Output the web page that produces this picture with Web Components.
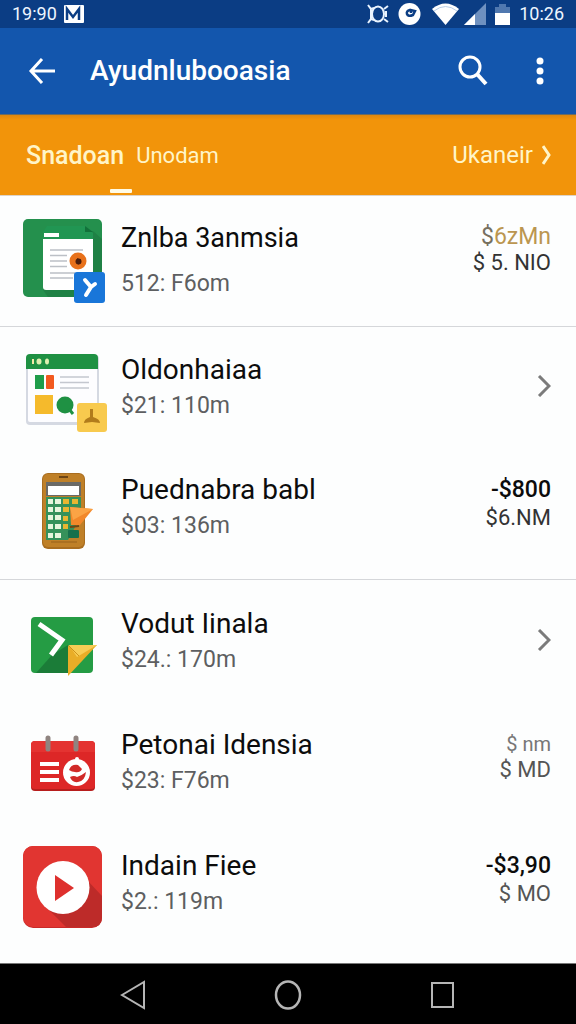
<!DOCTYPE html>
<html lang="en">
<head>
<meta charset="utf-8">
<meta name="viewport" content="width=device-width, initial-scale=1">
<title>Ayudnlubooasia</title>
<style>
body { margin: 0; font-family: Roboto, "Liberation Sans", sans-serif; background: #fdfefe; }
</style>
</head>
<body>
<phone-screen>
  <status-bar slot="top"></status-bar>
  <app-bar slot="top">Ayudnlubooasia</app-bar>
  <tab-strip slot="top"></tab-strip>
  <record-group class="first">
    <record-row roomy>
      <svg slot="icon" viewBox="0 0 84 84" width="84" height="84" aria-hidden="true">
        <rect width="79" height="78" rx="5" fill="#24904d"/>
        <path d="M20 71 L25 78 H74 Q79 78 79 73 V20 L70 12z" fill="#1f8145"/>
        <path d="M20 13 L24 7 H62 L70 14 V22 H20z" fill="#219653"/>
        <path d="M62 7 V13 H70z" fill="#12713a"/>
        <path d="M20 20 H70 V71 H23 Q20 71 20 68z" fill="#fff"/>
        <rect x="21" y="14" width="15" height="4" fill="#fff"/>
        <path d="M27 31H60M27 36.500H44M27 42H44M27 47.500H44M27 54H52M27 59H50" stroke="#bcc0c6" stroke-width="1.500"/>
        <circle cx="55" cy="42" r="8.500" fill="#e8711b"/><circle cx="55.500" cy="42.500" r="3" fill="#4a1d0c"/><path d="M54 39l4 2-3 5z" fill="#4a1d0c"/>
        <rect x="51" y="53" width="31" height="31" rx="3" fill="#1976d9"/>
        <path d="M62 61l6 7-5 8M68 68l4-3" fill="none" stroke="#fff" stroke-width="4" stroke-linecap="round" stroke-linejoin="round"/>
      </svg>
      <span slot="title">Znlba 3anmsia</span><span slot="detail">512: F6om</span>
      <record-amount slot="end" tight class="gold"><span slot="main"><span style="color:#77705f">$</span>6zMn</span><span slot="sub">$ 5. NIO</span></record-amount>
    </record-row>
  </record-group>
  <record-group class="second">
    <record-row>
      <svg slot="icon" viewBox="0 0 84 84" width="84" height="84" aria-hidden="true">
        <rect x="3" y="9" width="73" height="70" rx="4" fill="#d5d9e2"/>
        <rect x="5" y="20" width="69" height="56" rx="2" fill="#fdfdff"/>
        <path d="M3 23V12Q3 8 7 8H71Q75 8 75 12V23z" fill="#1f9143"/>
        <path d="M10 13v5" stroke="#f5e9a8" stroke-width="2"/><ellipse cx="16" cy="15.500" rx="2.500" ry="3" fill="#dff0b0"/><ellipse cx="24" cy="15.500" rx="2" ry="3" fill="#dff0b0"/>
        <rect x="12" y="29" width="9" height="14" fill="#1f9d4b"/><rect x="23" y="29" width="8" height="14" rx="1" fill="#f2591f"/>
        <path d="M37 31H66M37 36.500H66M37 42H66" stroke="#c4c7cf" stroke-width="1.700"/>
        <rect x="12" y="49" width="18" height="19" fill="#f5ba2c"/>
        <circle cx="42" cy="59" r="8.500" fill="#1f9143"/><path d="M46 63l4 5" stroke="#1f9143" stroke-width="3"/>
        <rect x="54" y="57" width="30" height="29" rx="3" fill="#f8ca4e"/>
        <path d="M67 63h3v8q7 2 7 6l-8-1-8 1q0-4 6-6z" fill="#b17c1b"/>
      </svg>
      <span slot="title">Oldonhaiaa</span><span slot="detail">$21: 110m</span>
      <open-button slot="end" label="Open Oldonhaiaa"></open-button>
    </record-row>
    <record-row>
      <svg slot="icon" viewBox="0 0 84 84" width="84" height="84" aria-hidden="true">
        <rect x="19" y="7" width="43" height="76" rx="6" fill="#a96d1f"/>
        <rect x="20" y="8" width="41" height="73" rx="5" fill="#bf8028"/>
        <rect x="36" y="10" width="9" height="2" fill="#6e4513"/>
        <rect x="23" y="16" width="35" height="14" fill="#6b6a66"/><rect x="25" y="20" width="31" height="9" fill="#fff"/>
        <path d="M23 31H58V50L45 74H23z" fill="#35915a"/>
        <g fill="#e6f5dc"><rect x="25" y="33" width="5" height="5"/><rect x="32" y="33" width="6" height="5"/><rect x="25" y="41" width="5" height="5"/><rect x="32" y="41" width="6" height="5"/><rect x="25" y="49" width="5" height="5"/><rect x="32" y="49" width="6" height="5"/><rect x="25" y="58" width="5" height="5"/><rect x="32" y="58" width="6" height="5"/><rect x="25" y="67" width="5" height="5"/><rect x="32" y="67" width="6" height="5"/></g>
        <g fill="#e9b631"><rect x="40" y="33" width="6" height="5"/><rect x="49" y="33" width="6" height="5"/><rect x="40" y="41" width="6" height="5"/><rect x="40" y="50" width="5" height="5"/><rect x="40" y="58" width="5" height="5"/></g>
        <path d="M47 41L70 43 57 59 48 59z" fill="#f2882a"/><path d="M47 41L70 43 50 54z" fill="#fba445"/>
        <path d="M47 61l9-1" stroke="#6e4513" stroke-width="2"/><rect x="45" y="64" width="11" height="8" rx="1" fill="#17704c"/>
        <path d="M28 76H54" stroke="#97601a"/>
      </svg>
      <span slot="title">Puednabra babl</span><span slot="detail">$03: 136m</span>
      <record-amount slot="end" class="strong"><span slot="main">-$800</span><span slot="sub">$6.NM</span></record-amount>
    </record-row>
  </record-group>
  <record-group class="third">
    <record-row>
      <svg slot="icon" viewBox="0 0 84 84" width="84" height="84" aria-hidden="true">
        <rect x="8" y="17" width="62" height="56" rx="4" fill="#259c44"/>
        <path d="M13 73L29 55 45 45V73z" fill="#1b7c38"/>
        <path d="M16 24L39 40 28 55" fill="none" stroke="#fff" stroke-width="5"/>
        <path d="M45 47Q45 45 47 45H74L45 76z" fill="#e9ad27"/><path d="M46 45H74L54 57z" fill="#f7cd55"/><path d="M46 46l10 10" stroke="#ce9218"/>
      </svg>
      <span slot="title">Vodut Iinala</span><span slot="detail">$24.: 170m</span>
      <open-button slot="end" label="Open Vodut Iinala"></open-button>
    </record-row>
    <record-row>
      <svg slot="icon" viewBox="0 0 84 84" width="84" height="84" aria-hidden="true">
        <rect x="8" y="21" width="64" height="49" rx="4" fill="#b71e1d"/>
        <rect x="8" y="20" width="64" height="48" rx="4" fill="#dd2727"/>
        <path d="M8 31V24Q8 20 12 20H68Q72 20 72 24V31z" fill="#e43331"/>
        <path d="M25 17V28M53 17V28" stroke="#8f8480" stroke-width="5" stroke-linecap="round"/>
        <path d="M17 43H36M17 51H36M17 59H36" stroke="#fff" stroke-width="4"/>
        <circle cx="53.500" cy="51.500" r="13.500" fill="#fff"/><circle cx="54" cy="38" r="2" fill="#fff"/>
        <path d="M46 49q2-6 9-5l4 4q-2 4-7 3-3 0-6-2zM47 56q4-2 7 0 4-1 9-5-1 9-8 10-6 1-8-5z" fill="#d12a28"/>
      </svg>
      <span slot="title">Petonai Idensia</span><span slot="detail">$23: F76m</span>
      <record-amount slot="end" tight class="faint"><span slot="main">$ nm</span><span slot="sub">$ MD</span></record-amount>
    </record-row>
    <record-row>
      <svg slot="icon" viewBox="0 0 84 84" width="84" height="84" aria-hidden="true">
        <rect y="4" width="79" height="82" rx="10" fill="#c92a29"/>
        <rect y="4" width="79" height="81" rx="10" fill="#e13531"/>
        <path d="M64 38L79 54V75Q79 85 69 85H43L24 66z" fill="#bd2b29"/>
        <circle cx="40" cy="45.500" r="26.500" fill="#fff"/><path d="M32 33L51 46 32 59z" fill="#de302d"/>
      </svg>
      <span slot="title">Indain Fiee</span><span slot="detail">$2.: 119m</span>
      <record-amount slot="end" class="strong soft"><span slot="main">-$3,90</span><span slot="sub">$ MO</span></record-amount>
    </record-row>
  </record-group>
  <nav-keys slot="bottom"></nav-keys>
</phone-screen>
<script>
const define = (name, html) => customElements.define(name, class extends HTMLElement {
  constructor() {
    super();
    const template = document.createElement('template');
    template.innerHTML = html;
    this.attachShadow({ mode: 'open' }).append(template.content.cloneNode(true));
  }
  connectedCallback() {
    const button = this.shadowRoot.querySelector('button');
    if (button && this.hasAttribute('label')) button.setAttribute('aria-label', this.getAttribute('label'));
  }
});

define('phone-screen', `
<style>
:host { display: flex; flex-direction: column; min-height: 100vh; }
main { flex: 1; }
</style>
<header><slot name="top"></slot></header><main><slot></slot></main><slot name="bottom"></slot>`);

define('status-bar', `
<style>
:host { display: flex; align-items: center; height: 28px; box-sizing: border-box; padding: 0 12px; background: #0b3d84; color: #eef6ff; font-size: 18px; line-height: 24px; }
svg { display: block; }
.left, .right { display: flex; align-items: center; }
.left { gap: 7px; }
.right { gap: 9px; margin-left: auto; }
.wifi { margin: 0 -4px 0 2px; }
</style>
<div class="left"><span>19:90</span>
<svg width="20" height="18" viewBox="0 0 20 18"><rect width="20" height="18" rx="1" fill="#fff"/><path d="M3 15V4L9 12 15 4V15" fill="none" stroke="#0b3d84" stroke-width="2.500"/></svg></div>
<div class="right">
<svg width="22" height="22" viewBox="0 0 22 22" fill="none" stroke="#eaf4ff" stroke-width="2"><ellipse cx="11" cy="11" rx="6" ry="7.500"/><path d="M1 2l3 4 3-1M21 3l-4 3M1 20l3-4 3 1M17 16l4 3M4 6v10M19 8v6"/></svg>
<svg width="23" height="22" viewBox="0 0 23 22"><circle cx="11.500" cy="11" r="11" fill="#fff"/><path d="M12 7q-4 1-3 4t6 1l2-4-4-1v3" fill="none" stroke="#0b3d84" stroke-width="2.500"/></svg>
<svg class="wifi" width="27" height="22" viewBox="0 0 27 22"><path d="M0 6Q13.500-5 27 6L13.500 22z" fill="#fff"/><path d="M2 8Q13.500-1 25 8" fill="none" stroke="#b9cfe8" stroke-width="1"/></svg>
<svg width="22" height="22" viewBox="0 0 22 22"><path d="M0 22L22 0V22z" fill="#6f91c0"/><path d="M0 22L11 11V22z" fill="#fff"/></svg>
<svg width="15" height="21" viewBox="0 0 15 21"><path d="M0 3H4V0H11V3H15V21H0z" fill="#5078af"/><path d="M0 9H15V21H0z" fill="#fff"/></svg>
<span>10:26</span></div>`);

define('app-bar', `
<style>
:host { display: flex; align-items: center; height: 87px; box-sizing: border-box; padding: 0 20px 0 26px; background: #1356ad; color: #fff; border-bottom: 1px solid #6a6b62; }
h1 { flex: 1; margin: 0 0 0 32px; font-size: 28px; line-height: 36px; font-weight: 500; }
button { display: flex; justify-content: center; align-items: center; width: 32px; height: 48px; border: 0; padding: 0; background: none; }
.search { margin-right: 35px; }
</style>
<button aria-label="Back"><svg width="28" height="26" viewBox="0 0 28 26" fill="none" stroke="#fff" stroke-width="3"><path d="M14 1L3 13 14 25M3 13H27"/></svg></button>
<h1><slot></slot></h1>
<button class="search" aria-label="Search"><svg width="30" height="32" viewBox="0 0 30 32" fill="none" stroke="#fff"><circle cx="12" cy="12" r="10" stroke-width="3"/><path d="M19 19L28 29" stroke-width="4"/></svg></button>
<button aria-label="More options"><svg width="8" height="28" viewBox="0 0 8 28" fill="#fff"><circle cx="4" cy="4" r="3.500"/><circle cx="4" cy="14" r="3.500"/><circle cx="4" cy="24" r="3.500"/></svg></button>`);

define('tab-strip', `
<style>
:host { display: flex; align-items: stretch; height: 81px; box-sizing: border-box; padding: 0 24px 0 26px; background: linear-gradient(#dd8710, #f2940a 5px, #f2940a); border-bottom: 1px solid #ddd3c8; font-size: 24px; }
button { position: relative; border: 0; padding: 0; background: none; font: inherit; color: #fff5c8; }
.active { font-size: 25px; font-weight: 500; margin-right: 12px; }
.active::after { content: ""; position: absolute; right: -8px; bottom: 2px; width: 22px; height: 4px; border-radius: 1px; background: #fffbe6; }
.next { font-size: 22px; }
.more { display: flex; align-items: center; gap: 9px; margin-left: auto; }
svg { display: block; }
</style>
<button class="active">Snadoan</button><button class="next">Unodam</button>
<button class="more">Ukaneir<svg width="10" height="20" viewBox="0 0 10 20" fill="none" stroke="#fff5c8" stroke-width="3"><path d="M1 1L7 10 1 19"/></svg></button>`);

define('record-group', `
<style>
:host { display: flex; flex-direction: column; border-bottom: 1px solid #d5d7da; }
:host(.first) { padding: 0; }
:host(.second) { padding: 1px 0 11px; }
:host(.third) { padding-top: 2px; gap: 1px; border: 0; }
</style><slot></slot>`);

define('record-row', `
<style>
:host { display: flex; align-items: center; gap: 14px; min-height: 120px; box-sizing: border-box; padding: 0 25px 0 23px; }
:host([roomy]) { min-height: 130px; }
::slotted(svg) { display: block; flex: none; overflow: visible; }
.body { flex: 1; display: flex; align-items: flex-start; justify-content: space-between; }
.text { display: flex; flex-direction: column; }
:host([roomy]) .text { gap: 10px; }
h2, p { margin: 0; font-weight: 400; line-height: 36px; }
h2 { font-size: 28px; color: #0c0c0c; }
:host([roomy]) h2 { font-size: 27px; }
p { font-size: 23px; color: #5d5f61; }
</style>
<slot name="icon"></slot>
<div class="body"><div class="text"><h2><slot name="title"></slot></h2><p><slot name="detail"></slot></p></div><slot name="end"></slot></div>`);

define('record-amount', `
<style>
:host { display: flex; flex-direction: column; align-items: flex-end; padding-top: 4px; font-size: 22px; line-height: 28px; color: #333; }
:host([tight]) { line-height: 26px; }
:host(.gold) .main { font-size: 23px; color: #bb9650; }
:host(.strong) .main { font-size: 23px; color: #0c0c0c; font-weight: 500; }
:host(.soft) .sub, :host(.faint) { color: #555; }
:host(.faint) .main { font-size: 20px; color: #777; }
</style>
<div class="main"><slot name="main"></slot></div><div class="sub"><slot name="sub"></slot></div>`);

define('open-button', `
<style>
:host { display: block; }
button { display: flex; align-items: center; justify-content: flex-end; width: 48px; height: 68px; padding: 0; border: 0; background: none; }
</style>
<button><svg width="14" height="22" viewBox="0 0 14 22" fill="none" stroke="#7b7b7b" stroke-width="3"><path d="M2 1L12 11 2 21"/></svg></button>`);

define('nav-keys', `
<style>
:host { display: flex; height: 61px; padding: 0 56px; background: #000; border-top: 1px solid #777; box-sizing: border-box; }
button { flex: 1; display: flex; align-items: center; justify-content: center; border: 0; padding: 2px 0 0; background: none; }
</style>
<button aria-label="Back"><svg width="26" height="30" viewBox="0 0 26 30" fill="none" stroke="#b5b5b5" stroke-width="2"><path d="M2 15L24 2V28z"/></svg></button>
<button aria-label="Home"><svg width="28" height="30" viewBox="0 0 28 30" fill="none" stroke="#b5b5b5" stroke-width="2.500"><ellipse cx="14" cy="15" rx="12" ry="13.500"/></svg></button>
<button aria-label="Recent apps"><svg width="24" height="28" viewBox="0 0 24 28" fill="none" stroke="#b5b5b5" stroke-width="2"><rect x="1" y="2" width="21" height="24"/></svg></button>`);
</script>
</body>
</html>
